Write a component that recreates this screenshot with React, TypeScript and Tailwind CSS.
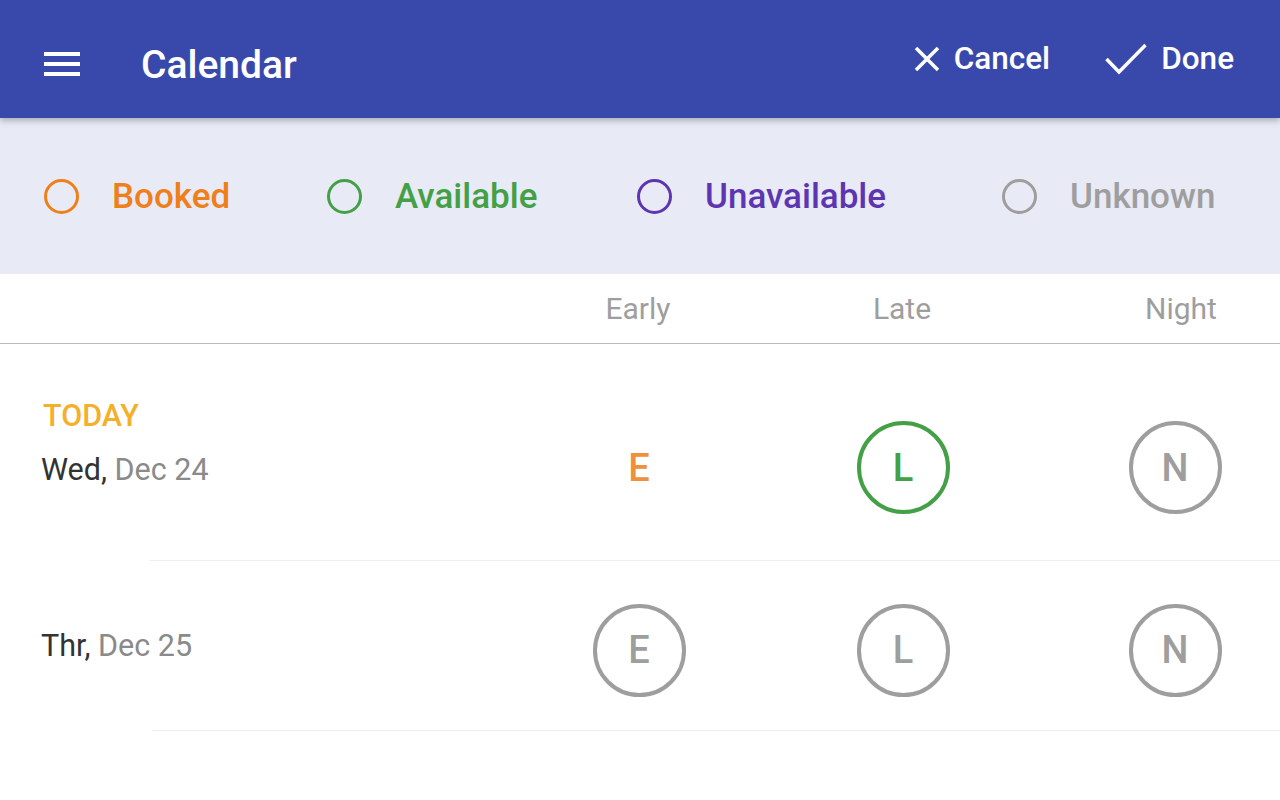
import React from "react";

type Status = "booked" | "available" | "unavailable" | "unknown";

const legend: { label: string; status: Status; width: string }[] = [
    { label: "Booked", status: "booked", width: "w-[283px]" },
    { label: "Available", status: "available", width: "w-[310px]" },
    { label: "Unavailable", status: "unavailable", width: "w-[365px]" },
    { label: "Unknown", status: "unknown", width: "" },
];

const legendColors: Record<Status, { border: string; text: string }> = {
    booked: { border: "border-[#EF7F1A]", text: "text-[#EF7F1A]" },
    available: { border: "border-[#43A047]", text: "text-[#43A047]" },
    unavailable: { border: "border-[#5E35B1]", text: "text-[#5E35B1]" },
    unknown: { border: "border-[#9E9E9E]", text: "text-[#9E9E9E]" },
};

function ShiftCell({ letter, status }: { letter: string; status: Status }) {
    if (status === "booked") {
        return (
            <div className="w-[93px] h-[93px] flex items-center justify-center text-[38px] leading-none font-medium text-[#F0903A]">
                {letter}
            </div>
        );
    }
    const border = status === "available" ? "border-[#43A047] text-[#43A047]" : "border-[#9E9E9E] text-[#9E9E9E]";
    return (
        <div className={`w-[93px] h-[93px] rounded-full border-[4px] flex items-center justify-center text-[38px] leading-none font-medium ${border}`}>
            {letter}
        </div>
    );
}

function ShiftCells({ shifts }: { shifts: { letter: string; status: Status }[] }) {
    return (
        <div className="flex">
            <div className="w-[190px] flex justify-center">
                <ShiftCell {...shifts[0]} />
            </div>
            <div className="w-[190px] ml-[74px] flex justify-center">
                <ShiftCell {...shifts[1]} />
            </div>
            <div className="w-[190px] ml-[82px] flex justify-center">
                <ShiftCell {...shifts[2]} />
            </div>
        </div>
    );
}

function App() {
    return (
        <div className="w-[1280px] h-[800px] bg-white overflow-hidden font-['Roboto',sans-serif]">
            {/* toolbar */}
            <header className="relative z-10 h-[118px] bg-[#3949AB] flex items-center text-white shadow-[0_3px_6px_rgba(0,0,0,0.25)]">
                <div className="ml-[44px] mt-[10px] w-[36px] flex flex-col gap-[6px]">
                    <span className="block h-[4px] bg-white" />
                    <span className="block h-[4px] bg-white" />
                    <span className="block h-[4px] bg-white" />
                </div>
                <h1 className="ml-[61px] mt-[12px] text-[39px] leading-none font-medium">Calendar</h1>
                <div className="ml-auto mr-[46px] flex items-center">
                    <button className="flex items-center">
                        <svg width="26" height="26" viewBox="0 0 26 26" fill="none" stroke="white" strokeWidth="3.5">
                            <path d="M2 2 L24 24 M24 2 L2 24" />
                        </svg>
                        <span className="ml-[14px] text-[31.5px] leading-none font-medium">Cancel</span>
                    </button>
                    <button className="ml-[55px] flex items-center">
                        <svg width="42" height="32" viewBox="0 0 42 32" fill="none" stroke="white" strokeWidth="3.5">
                            <path d="M1.5 16 L14 29 L40.5 2" />
                        </svg>
                        <span className="ml-[14px] text-[31.5px] leading-none font-medium">Done</span>
                    </button>
                </div>
            </header>

            {/* legend */}
            <div className="h-[156px] bg-[#E8EAF6] flex items-center pl-[44px]">
                {legend.map((item) => (
                    <div key={item.label} className={`flex items-center ${item.width}`}>
                        <span className={`block w-[35px] h-[35px] rounded-full border-[3.5px] ${legendColors[item.status].border}`} />
                        <span className={`ml-[33px] text-[35px] leading-none font-medium ${legendColors[item.status].text}`}>
                            {item.label}
                        </span>
                    </div>
                ))}
            </div>

            {/* column titles */}
            <div className="h-[70px] border-b border-[#BDBDBD] flex items-center text-[30px] leading-none text-[#9E9E9E]">
                <div className="w-[543px]" />
                <div className="w-[190px] text-center">Early</div>
                <div className="w-[190px] ml-[74px] text-center">Late</div>
                <div className="w-[190px] ml-[89px] text-center">Night</div>
            </div>

            {/* today */}
            <div className="h-[216px] flex items-start">
                <div className="w-[544px] pl-[41px] pt-[54px] text-[30.5px] leading-[36px]">
                    <div className="ml-[2px] text-[#F4B02A] font-medium">TODAY</div>
                    <div className="mt-[18px]">
                        <span className="text-[#333333]">Wed, </span>
                        <span className="text-[#8A8A8A]">Dec 24</span>
                    </div>
                </div>
                <div className="pt-[77px]">
                    <ShiftCells
                        shifts={[
                            { letter: "E", status: "booked" },
                            { letter: "L", status: "available" },
                            { letter: "N", status: "unknown" },
                        ]}
                    />
                </div>
            </div>
            <div className="ml-[150px] h-px bg-[#EEEEEE]" />

            {/* tomorrow */}
            <div className="h-[169px] pt-[9px] flex items-center">
                <div className="w-[544px] pl-[41px] pb-[8px] text-[30.5px] leading-[36px]">
                    <span className="text-[#333333]">Thr, </span>
                    <span className="text-[#8A8A8A]">Dec 25</span>
                </div>
                <ShiftCells
                    shifts={[
                        { letter: "E", status: "unknown" },
                        { letter: "L", status: "unknown" },
                        { letter: "N", status: "unknown" },
                    ]}
                />
            </div>
            <div className="ml-[152px] h-px bg-[#EEEEEE]" />
        </div>
    );
}

export default App;
